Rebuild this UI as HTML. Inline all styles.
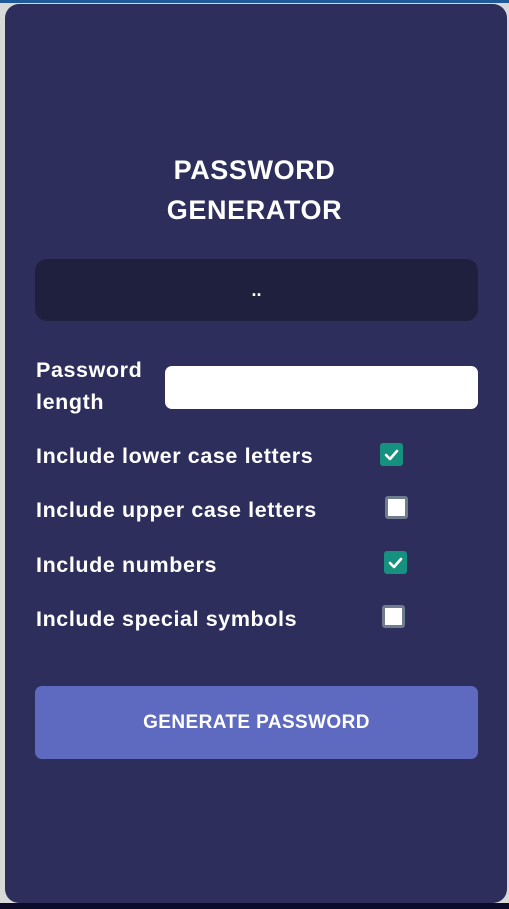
<!DOCTYPE html>
<html><head><style>
*{margin:0;padding:0;box-sizing:border-box}
body{width:509px;height:909px;background:#d9d9d9;position:relative;overflow:hidden;font-family:"Liberation Sans",sans-serif;color:#fff;font-weight:bold}
.top{position:absolute;left:0;top:0;width:509px;height:3px;background:#1e5a9a}
.bot{position:absolute;left:0;top:903px;width:509px;height:6px;background:#0d0b2a}
.card{position:absolute;left:5px;top:4px;width:502px;height:899px;background:#2d2e5c;border-radius:14px}
.t{position:absolute;white-space:nowrap}
.title{left:0;width:509px;text-align:center;font-size:27px;letter-spacing:0.6px;line-height:40px;top:150px}
.out{position:absolute;left:35px;top:259px;width:443px;height:62px;background:#1f1f3e;border-radius:12px;text-align:center;font-size:18px;line-height:62px}
.inp{position:absolute;left:165px;top:366px;width:313px;height:43px;background:#fff;border-radius:7px}
.lbl{font-size:21.5px;letter-spacing:0.6px;left:36px;line-height:26px}
.cb{position:absolute;width:23px;height:23px;border-radius:3px}
.on{background:#16917f}
.off{background:#fff;border:3px solid #6f7c8e}
.btn{position:absolute;left:35px;top:686px;width:443px;height:73px;background:#5d6abf;border-radius:7px;text-align:center;font-size:19px;letter-spacing:0.4px;line-height:73px}
</style></head><body>
<div class="top"></div>
<div class="card"></div>
<div class="bot"></div>
<div class="t title">PASSWORD<br>GENERATOR</div>
<div class="out">..</div>
<div class="t lbl" style="top:354px;line-height:32px">Password<br>length</div>
<div class="inp"></div>
<div class="t lbl" style="top:443px">Include lower case letters</div>
<div class="t lbl" style="top:497px">Include upper case letters</div>
<div class="t lbl" style="top:552px">Include numbers</div>
<div class="t lbl" style="top:606px">Include special symbols</div>
<div class="cb on" style="left:380px;top:443px"><svg width="23" height="23"><path d="M6 12l4 4 7-8" stroke="#fff" stroke-width="2.6" fill="none" stroke-linecap="round" stroke-linejoin="round"/></svg></div>
<div class="cb off" style="left:385px;top:496px"></div>
<div class="cb on" style="left:384px;top:551px"><svg width="23" height="23"><path d="M6 12l4 4 7-8" stroke="#fff" stroke-width="2.6" fill="none" stroke-linecap="round" stroke-linejoin="round"/></svg></div>
<div class="cb off" style="left:382px;top:605px"></div>
<div class="btn">GENERATE PASSWORD</div>
</body></html>
